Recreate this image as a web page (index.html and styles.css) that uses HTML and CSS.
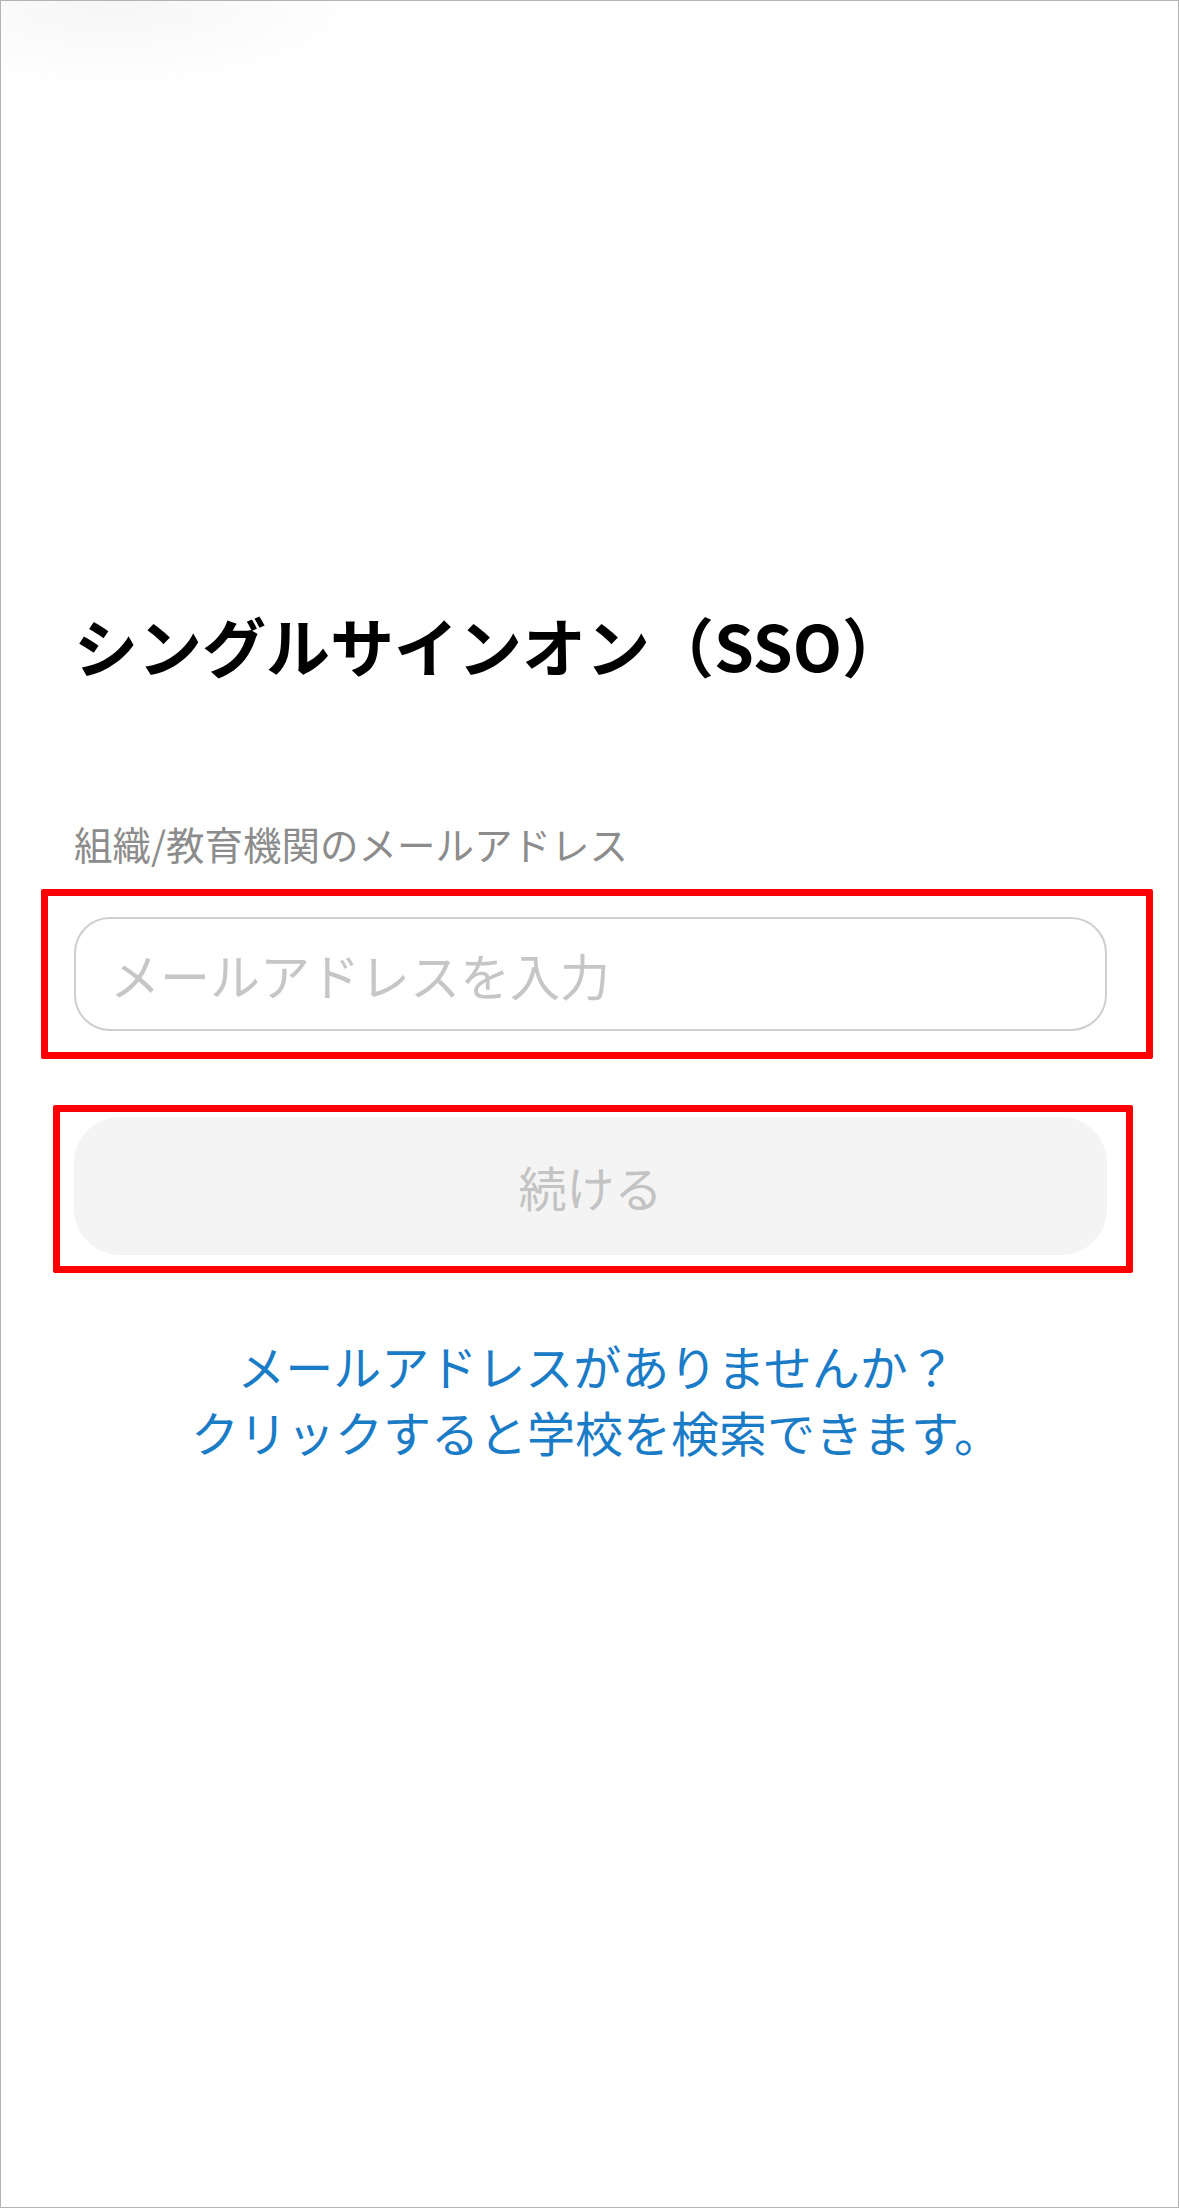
FILE: index.html
```html
<!DOCTYPE html>
<html lang="ja">
<head>
<meta charset="utf-8">
<title>シングルサインオン（SSO）</title>
<link rel="stylesheet" href="styles.css">
</head>
<body>
<div class="screen">
  <main class="sso">
    <h1 class="sso-title">シングルサインオン（SSO）</h1>
    <form class="sso-form">
      <label class="field-label" for="email">組織/教育機関のメールアドレス</label>
      <input class="field-input" id="email" type="email" placeholder="メールアドレスを入力">
      <button class="continue-btn" type="button" disabled>続ける</button>
    </form>
    <a class="school-link" href="#">メールアドレスがありませんか？<br>クリックすると学校を検索できます。</a>
  </main>
  <div class="mark mark-input"></div>
  <div class="mark mark-button"></div>
</div>
</body>
</html>
```

FILE: styles.css
```css
html, body {
  margin: 0;
  padding: 0;
  background: #ffffff;
}

.screen {
  position: relative;
  box-sizing: border-box;
  width: 1179px;
  height: 2208px;
  border: 1px solid #b3b3b3;
  background: radial-gradient(ellipse 260px 90px at 110px 0px, #f6f6f6 0%, #fbfbfb 55%, #ffffff 100%);
  font-family: "Noto Sans CJK JP", "Noto Sans", sans-serif;
  overflow: hidden;
}

.sso {
  padding: 0 71px 0 73px;
  display: flex;
  flex-direction: column;
}

.sso-title {
  margin: 598px 0 0 0;
  font-size: 64px;
  line-height: 90px;
  font-weight: 700;
  color: #000000;
}

.sso-form {
  display: flex;
  flex-direction: column;
  margin: 0;
}

.field-label {
  margin-top: 126px;
  font-size: 38.5px;
  line-height: 56px;
  color: #8c8c8c;
}

.field-input {
  box-sizing: border-box;
  margin-top: 46px;
  width: 100%;
  height: 114px;
  padding: 0 34px;
  border: 2px solid #cfcfcf;
  border-radius: 36px;
  background: #ffffff;
  font-family: inherit;
  font-size: 50px;
  color: #222222;
  outline: none;
}

.field-input::placeholder {
  color: #c6c6c6;
}

.continue-btn {
  box-sizing: border-box;
  margin-top: 86px;
  width: 100%;
  height: 138px;
  border: 0;
  border-radius: 46px;
  background: #f4f4f4;
  font-family: inherit;
  font-size: 48px;
  color: #c3c3c3;
}

.school-link {
  margin-top: 77px;
  padding-left: 12px;
  text-align: center;
  font-size: 48px;
  line-height: 66px;
  color: #1a7bc6;
  text-decoration: none;
}

/* red highlight frames drawn over the form controls */
.mark {
  position: absolute;
  box-sizing: border-box;
  border: 7px solid #ff0000;
  border-radius: 2px;
}

.mark-input {
  left: 40px;
  top: 888px;
  width: 1112px;
  height: 170px;
}

.mark-button {
  left: 52px;
  top: 1104px;
  width: 1080px;
  height: 168px;
}
```
